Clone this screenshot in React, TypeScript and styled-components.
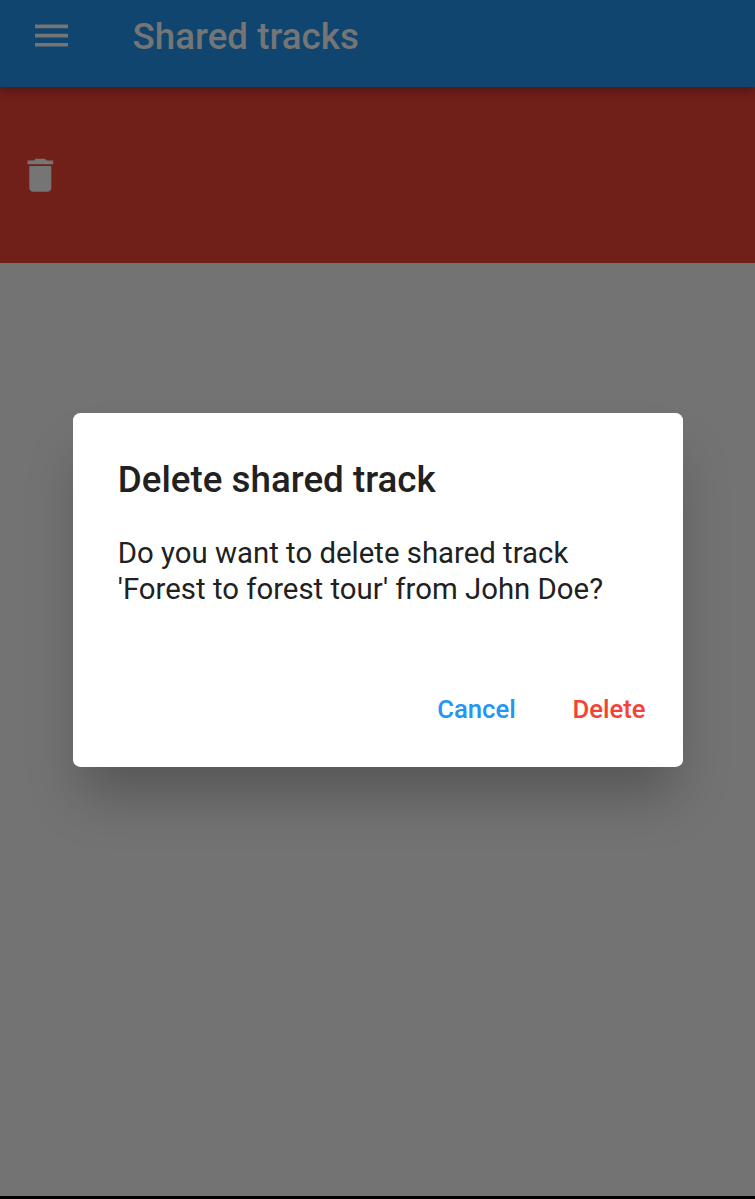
import React from "react";
import styled, { createGlobalStyle } from "styled-components";

const GlobalStyle = createGlobalStyle`
  * { box-sizing: border-box; }
  body { margin: 0; background: #737373; font-family: Roboto, "Liberation Sans", sans-serif; }
`;
const Screen = styled.div`
  position: relative;
  display: flex;
  flex-direction: column;
  width: 755px;
  height: 1199px;
  overflow: hidden;
  background: #737373;
  border-bottom: 3px solid #000;
`;
const AppBar = styled.header`
  z-index: 1;
  display: flex;
  align-items: flex-start;
  flex: 0 0 87px;
  padding: 14px 0 0 29px;
  background: #0f456f;
  box-shadow: 0 4px 9px rgba(0, 0, 0, 0.28);
`;
const MenuIcon = styled.svg`
  width: 44px;
  height: 44px;
  fill: #757575;
`;
const Title = styled.h1`
  margin: 0 0 0 59.5px;
  font-size: 36.75px;
  line-height: 45px;
  font-weight: 500;
  color: #757575;
`;
const SwipeRow = styled.div`
  display: flex;
  align-items: center;
  flex: 0 0 176.4px;
  padding-left: 18px;
  background: #701f19;
`;
const TrashIcon = styled.svg`
  width: 44px;
  height: 44px;
  fill: #757575;
`;
const Overlay = styled.div`
  position: absolute;
  inset: 0;
  z-index: 2;
  display: flex;
  justify-content: center;
  align-items: flex-start;
  padding: 412.7px 72.4px 0 73.4px;
`;
const Dialog = styled.section`
  display: flex;
  flex-direction: column;
  width: 609.2px;
  height: 354.6px;
  padding: 44.3px 37px 0 44.4px;
  border-radius: 7.3px;
  background: #fff;
  color: #212121;
  box-shadow: 0 36px 50px -9px rgba(0, 0, 0, 0.26);
`;
const DialogTitle = styled.h2`
  margin: 0;
  font-size: 36.75px;
  line-height: 45px;
  font-weight: 500;
`;
const Message = styled.p`
  margin: 34.5px 0 0;
  font-size: 29.36px;
  line-height: 35.3px;
`;
const Actions = styled.div`
  display: flex;
  justify-content: flex-end;
  gap: 56.6px;
  margin-top: 86.6px;
`;
const Action = styled.button<{ $danger?: boolean }>`
  padding: 0;
  border: 0;
  background: none;
  font: 500 25.7px/30px Roboto, sans-serif;
  color: ${(p) => (p.$danger ? "#f44336" : "#2196f3")};
`;

export default function App() {
  return (
    <Screen>
      <GlobalStyle />
      <AppBar>
        <MenuIcon viewBox="-0.27 0.22 24 24"><path d="M3 18h18v-2H3v2zm0-5h18v-2H3v2zm0-7v2h18V6H3z" /></MenuIcon>
        <Title>Shared tracks</Title>
      </AppBar>
      <SwipeRow>
        <TrashIcon viewBox="-0.18 -0.12 24 24"><path d="M6 19c0 1.1.9 2 2 2h8c1.1 0 2-.9 2-2V7H6v12zM19 4h-3.5l-1-1h-5l-1 1H5v2h14V4z" /></TrashIcon>
      </SwipeRow>
      <Overlay>
        <Dialog role="dialog">
          <DialogTitle>Delete shared track</DialogTitle>
          <Message>Do you want to delete shared track<br />'Forest to forest tour' from John Doe?</Message>
          <Actions>
            <Action>Cancel</Action>
            <Action $danger>Delete</Action>
          </Actions>
        </Dialog>
      </Overlay>
    </Screen>
  );
}
